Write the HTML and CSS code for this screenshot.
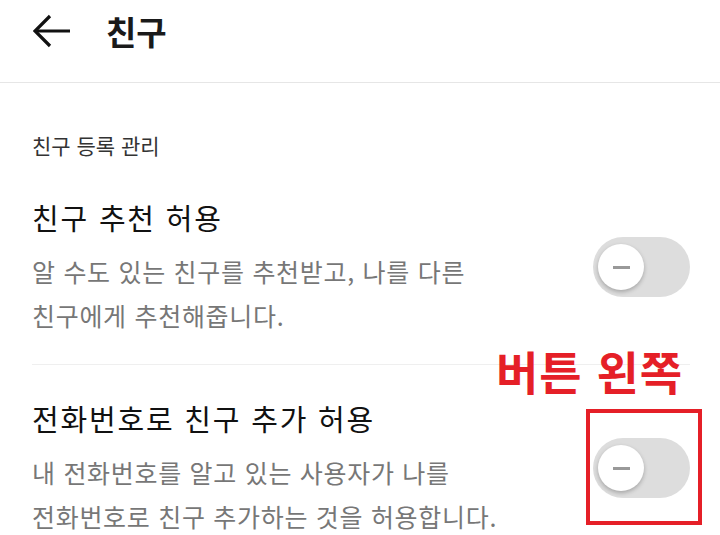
FILE: index.html
```html
<!DOCTYPE html>
<html lang="ko">
<head>
  <meta charset="UTF-8" />
  <meta name="viewport" content="width=device-width, initial-scale=1.0" />
  <title>친구</title>
  <link rel="stylesheet" href="styles.css">
</head>
<body>
  <header class="topbar">
    <button class="back" aria-label="뒤로">
      <svg width="38" height="34" viewBox="0 0 38 34" fill="none" stroke="#111" stroke-width="3.2" stroke-linecap="butt" stroke-linejoin="miter">
        <path d="M2 17 H37" />
        <path d="M17 2 L2 17 L17 32" />
      </svg>
    </button>
    <h1>친구</h1>
  </header>

  <main class="content">
    <div class="section-label">친구 등록 관리</div>

    <div class="item">
      <div class="item-text">
        <div class="item-title">친구 추천 허용</div>
        <div class="item-desc">알 수도 있는 친구를 추천받고, 나를 다른 친구에게 추천해줍니다.</div>
      </div>
      <div class="toggle"><span class="knob"></span></div>
    </div>

    <div class="item">
      <div class="item-text">
        <div class="item-title">전화번호로 친구 추가 허용</div>
        <div class="item-desc">내 전화번호를 알고 있는 사용자가 나를 전화번호로 친구 추가하는 것을 허용합니다.</div>
      </div>
      <div class="toggle"><span class="knob"></span></div>
    </div>
  </main>

  <!-- annotation overlay -->
  <div class="note">버튼 왼쪽</div>
  <div class="note-box"></div>
</body>
</html>
```

FILE: styles.css
```css
* { box-sizing: border-box; }
body {
  margin: 0;
  font-family: "Noto Sans CJK KR", "Noto Sans", sans-serif;
  background: #fff;
  color: #111;
  position: relative;
  width: 720px;
  height: 535px;
  overflow: hidden;
  word-break: keep-all;
}

.topbar {
  display: flex;
  align-items: center;
  height: 83px;
  padding: 0 0 20px 33px;
  border-bottom: 1px solid #e6e6e6;
}
.back {
  border: 0;
  background: none;
  padding: 0;
  display: flex;
}
.topbar h1 {
  margin: 0 0 0 35px;
  font-size: 33px;
  font-weight: 700;
  line-height: 40px;
  color: #1a1a1a;
}

.content { padding: 0 30px 0 32px; }
.section-label {
  margin-top: 48px;
  font-size: 21px;
  line-height: 28px;
  color: #333;
}

.item {
  display: flex;
  align-items: center;
  justify-content: space-between;
  padding: 33px 0 27px;
}
.section-label + .item { padding-top: 38px; }
.item:last-child { padding-bottom: 0; }
.item + .item { border-top: 1px solid #efefef; }
.item-text { max-width: 500px; }
.item-title {
  font-size: 29px;
  line-height: 40px;
  letter-spacing: 1.8px;
  margin-bottom: 12px;
  color: #111;
}
.item-desc {
  font-size: 25px;
  line-height: 44px;
  letter-spacing: 0.7px;
  color: #777;
}

.toggle {
  flex: none;
  position: relative;
  width: 97px;
  height: 60px;
  border-radius: 30px;
  background: #dddddd;
}
.knob {
  position: absolute;
  left: 5px;
  top: 7px;
  width: 46px;
  height: 46px;
  border-radius: 50%;
  background: #fff;
  box-shadow: 0 2px 4px rgba(0,0,0,0.25);
}
.knob::after {
  content: "";
  position: absolute;
  left: 15px;
  top: 22px;
  width: 17px;
  height: 2.5px;
  background: #999;
}

.note {
  position: absolute;
  left: 496px;
  top: 340px;
  font-size: 46px;
  font-weight: 700;
  line-height: 60px;
  color: #e51f27;
  letter-spacing: 1px;
}
.note-box {
  position: absolute;
  left: 586px;
  top: 409px;
  width: 116px;
  height: 116px;
  border: 4px solid #e51f27;
}
```
